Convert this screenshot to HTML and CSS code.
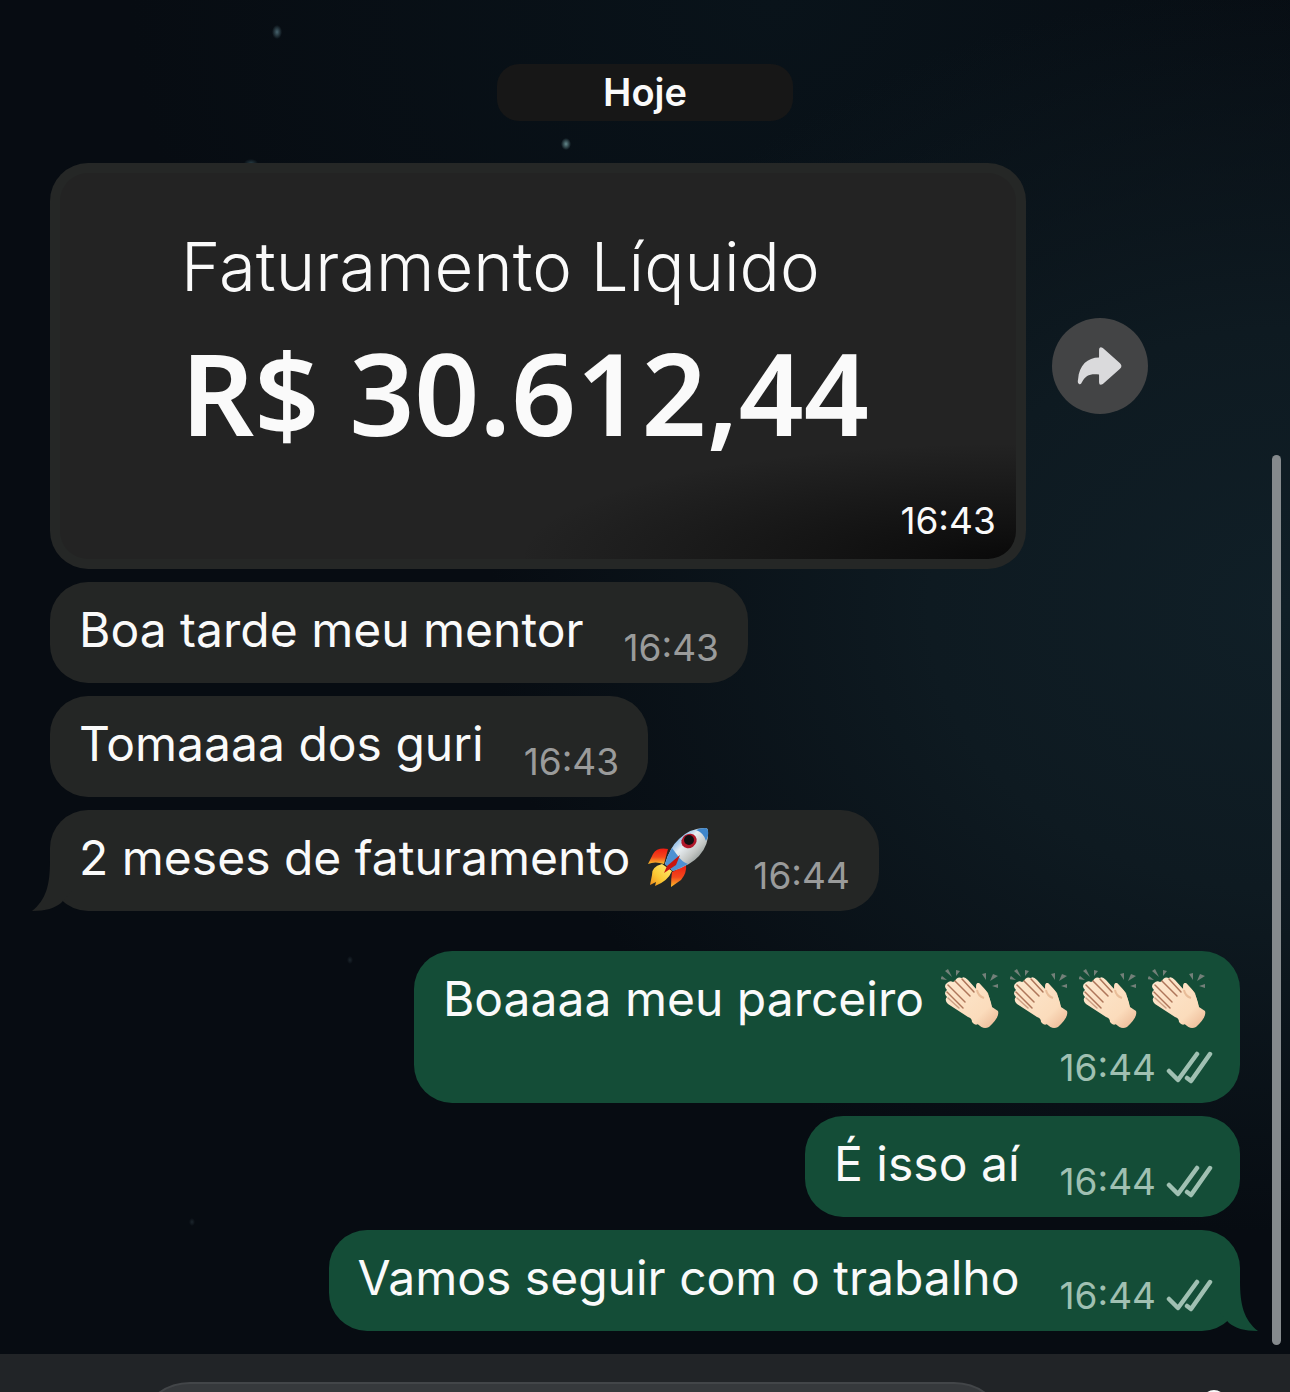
FILE: index.html
```html
<!DOCTYPE html>
<html lang="pt-BR">
<head>
<meta charset="utf-8">
<meta name="viewport" content="width=device-width, initial-scale=1">
<title>Conversa</title>
<link rel="stylesheet" href="styles.css">
</head>
<body>
<svg class="defs" aria-hidden="true">
  <defs>
    <linearGradient id="fin" x1="0" y1="0" x2="0" y2="1">
      <stop offset="0" stop-color="#ee1c12"/><stop offset=".55" stop-color="#f4481c"/><stop offset="1" stop-color="#fbc02a"/>
    </linearGradient>
    <linearGradient id="flame" x1="1" y1="0" x2="0" y2="1">
      <stop offset="0" stop-color="#fff27a"/><stop offset=".6" stop-color="#fbc934"/><stop offset="1" stop-color="#f08a1c"/>
    </linearGradient>
    <linearGradient id="hull" x1="0" y1="0" x2="1" y2="1">
      <stop offset=".2" stop-color="#5a9fe0"/><stop offset=".42" stop-color="#e8eef2"/><stop offset=".62" stop-color="#c3c6c4"/><stop offset=".85" stop-color="#77827f"/>
    </linearGradient>
    <linearGradient id="skin" x1="0" y1="0" x2="1" y2="1">
      <stop offset="0" stop-color="#fde8cf"/><stop offset=".7" stop-color="#fbdcbc"/><stop offset="1" stop-color="#eab591"/>
    </linearGradient>
    <symbol id="rocket" viewBox="0 0 66 62">
      <path d="M21 22 Q10 20 6 27 L1 37 Q8 34 17 37Z" fill="url(#fin)"/>
      <path d="M39 38 Q40 46 34 53 L24 60 Q24 52 25 45Z" fill="url(#fin)"/>
      <path d="M15 37 Q4 40 5 48 L3 58 L9 55 L8 59 Q21 54 25 44Z" fill="url(#flame)"/>
      <path d="M58 1 Q43 1 32 12 Q23 20 18 37 L26 44 Q44 38 52 29 Q62 18 61 4 Q61 1 58 1Z" fill="url(#hull)"/>
      <path d="M58 1 Q53 1 49 3 Q57 6 59 14 Q62 8 61 4 Q61 1 58 1Z" fill="#3f86ca"/>
      <path d="M25 21 Q20 29 18 37 L26 44 Q34 41 41 37 Q34 34 31 29Z" fill="#4e91d3"/>
      <path d="M33 28 L20 39 L17 46 L29 38Z" fill="#c9150f"/>
      <ellipse cx="42" cy="14" rx="8" ry="7" transform="rotate(-35 42 14)" fill="#b0182a"/>
      <ellipse cx="42" cy="13" rx="5" ry="5" fill="#121012"/>
    </symbol>
    <symbol id="clap" viewBox="0 0 66 62">
      <g fill="#738079">
        <path d="M4 3 L7 1 L11 9Z"/><path d="M15 2 L19 3 L15 8Z"/><path d="M-1 11 L1 8 L6 12Z"/>
        <path d="M41 6 L45 5 L45 12Z"/><path d="M52 6 L57 8 L49 13Z"/><path d="M57 16 L57 20 L51 18Z"/>
      </g>
      <path d="M35 20 Q35 13 39 16 Q44 21 47 25 L51 40 Q57 42 56 49 L46 58 Q34 59 29 46Z" fill="#f3cba8"/>
      <path d="M14 13 Q16 8 21 10 Q23 8 27 12 L36 22 Q34 14 38 15 L45 23 Q49 29 51 39 L57 43 Q59 49 48 59 Q42 62 37 56 Q34 58 31 54 Q31 50 27 49 L7 36 Q3 32 6 29 Q2 25 6 22 Q2 18 6 15 Q9 12 12 14Z" fill="url(#skin)"/>
      <g fill="none" stroke="#ae765a" stroke-width="1.5" stroke-linecap="round">
        <path d="M14 13 L29 28"/><path d="M21 11 L33 24"/><path d="M7 17 L24 34"/><path d="M6 24 L22 40"/><path d="M7 30 L18 40" opacity=".6"/>
      </g>
      <path d="M36 22 Q37 28 43 30" fill="none" stroke="#e8bd99" stroke-width="2"/>
    </symbol>
    <symbol id="ticks" viewBox="0 0 48 34">
      <g fill="none" stroke="currentColor" stroke-width="4.5" stroke-linecap="round" stroke-linejoin="round">
        <path d="M3 20 L12 29 L31 3"/><path d="M21 27 L25 30 L44 3"/>
      </g>
    </symbol>
  </defs>
</svg>

<div class="app">
  <main class="chat">
    <div class="date">Hoje</div>

    <section class="group" aria-label="Mensagens recebidas">
      <div class="row">
        <figure class="photo">
          <div class="photo-body">
            <p class="photo-title">Faturamento Líquido</p>
            <p class="photo-amount">R$ 30.612,44</p>
            <time class="photo-time">16:43</time>
          </div>
        </figure>
        <button class="forward" type="button" aria-label="Encaminhar">
          <svg viewBox="0 0 48 42" aria-hidden="true"><path d="M23 4 Q23 0 27 2 L45 18 Q48 21 45 24 L27 40 Q23 42 23 38 V30 C13 29 9 31 5 38 Q4 41 2 40 Q0 39 1 35 C2 20 11 12 23 12Z" fill="currentColor"/></svg>
        </button>
      </div>
      <article class="bubble"><p class="text">Boa tarde meu mentor</p><span class="meta"><time>16:43</time></span></article>
      <article class="bubble"><p class="text">Tomaaaa dos guri</p><span class="meta"><time>16:43</time></span></article>
      <article class="bubble">
        <p class="text">2 meses de faturamento <svg class="emoji" role="img" aria-label="foguete"><use href="#rocket"/></svg></p><span class="meta"><time>16:44</time></span>
        <svg class="tail" viewBox="0 0 40 50" aria-hidden="true"><path d="M18 0 C18 24 14 39 0 50 C14 50 23 47 29 42 L40 30 V0Z" fill="currentColor"/></svg>
      </article>
    </section>

    <section class="group sent" aria-label="Mensagens enviadas">
      <article class="bubble stacked">
        <p class="text">Boaaaa meu parceiro <span class="emojis"><svg class="emoji" role="img" aria-label="palmas"><use href="#clap"/></svg><svg class="emoji" role="img" aria-label="palmas"><use href="#clap"/></svg><svg class="emoji" role="img" aria-label="palmas"><use href="#clap"/></svg><svg class="emoji" role="img" aria-label="palmas"><use href="#clap"/></svg></span></p>
        <span class="meta"><time>16:44</time><svg class="ticks" role="img" aria-label="Entregue"><use href="#ticks"/></svg></span>
      </article>
      <article class="bubble"><p class="text">É isso aí</p><span class="meta"><time>16:44</time><svg class="ticks" role="img" aria-label="Entregue"><use href="#ticks"/></svg></span></article>
      <article class="bubble">
        <p class="text">Vamos seguir com o trabalho</p><span class="meta"><time>16:44</time><svg class="ticks" role="img" aria-label="Entregue"><use href="#ticks"/></svg></span>
        <svg class="tail" viewBox="0 0 40 50" aria-hidden="true"><path d="M18 0 C18 24 14 39 0 50 C14 50 23 47 29 42 L40 30 V0Z" fill="currentColor"/></svg>
      </article>
    </section>
    <div class="scrollbar"></div>
  </main>

  <footer class="composer">
    <input class="field" type="text" aria-label="Mensagem">
    <button class="camera" type="button" aria-label="Câmera"></button>
  </footer>
</div>
</body>
</html>
```
FILE: styles.css
```css
* { box-sizing: border-box; }

body {
  margin: 0;
  background: #070c12;
  color: #fafafa;
  font-family: Inter, "Liberation Sans", sans-serif;
}

p, figure { margin: 0; }
.defs { position: absolute; width: 0; height: 0; }

.app {
  display: flex;
  flex-direction: column;
  min-height: 100vh;
}

.chat {
  position: relative;
  flex: 1;
  display: flex;
  flex-direction: column;
  padding: 64px 50px 22px;
  background:
    radial-gradient(ellipse 5px 7px at 277px 32px, #47636d, transparent),
    radial-gradient(ellipse 5px 6px at 566px 144px, #64898c, transparent),
    radial-gradient(ellipse 7px 4px at 251px 163px, #263a42, transparent),
    radial-gradient(ellipse 3px 4px at 350px 960px, #1c262d, transparent),
    radial-gradient(ellipse 3px 4px at 192px 1222px, #1c262d, transparent),
    radial-gradient(ellipse 62% 46% at 100% 45%, #101f27, #0e1a21 45%, transparent),
    radial-gradient(ellipse 50% 40% at 60% 0%, #09131a, transparent),
    #070c12;
}

.date {
  align-self: center;
  width: 296px;
  margin-bottom: 42px;
  border-radius: 22px;
  background: #171717;
  font-size: 38px;
  font-weight: 600;
  line-height: 57px;
  text-align: center;
}

.group {
  display: flex;
  flex-direction: column;
  align-items: flex-start;
  gap: 13px;
}

.row {
  display: flex;
  align-items: center;
  gap: 26px;
  width: 100%;
}

.photo {
  width: 82%;
  padding: 10px;
  border-radius: 38px;
  background: #252726;
}

.photo-body {
  position: relative;
  padding: 54px 40px 101px 121px;
  border-radius: 28px;
  background:
    radial-gradient(ellipse 52% 30% at 100% 100%, #090909, #0f0f0f 20%, transparent),
    #232323;
  white-space: nowrap;
}

.photo-title {
  margin-bottom: 19px;
  font-size: 67px;
  font-weight: 300;
  line-height: 80px;
}

.photo-amount {
  font-family: "Noto Sans", "Open Sans", sans-serif;
  font-size: 114px;
  font-weight: 600;
  line-height: 132px;
}

.photo-time {
  position: absolute;
  right: 20px;
  bottom: 16px;
  font-size: 37px;
  line-height: 44px;
}

.forward {
  flex: none;
  display: grid;
  place-items: center;
  width: 96px;
  height: 96px;
  padding: 0;
  border: 0;
  border-radius: 50%;
  background: #434445;
  color: #dadadc;
}
.forward svg { width: 46px; height: 40px; }

.bubble {
  position: relative;
  display: flex;
  align-items: flex-end;
  gap: 7px 40px;
  padding: 18px 29px 13px;
  border-radius: 38px;
  background: #242625;
}

.text {
  display: flex;
  align-items: center;
  gap: 17px;
  margin-bottom: 10px;
  font-size: 48px;
  line-height: 60px;
  white-space: nowrap;
}

.emojis { display: flex; gap: 3px; }
.emoji { flex: none; width: 66px; height: 62px; margin: -1px 0; overflow: visible; }
.emoji symbol { overflow: visible; }

.meta {
  display: flex;
  align-items: center;
  gap: 10px;
  color: #9a9b9b;
  font-size: 37px;
  line-height: 44px;
}
.ticks { width: 48px; height: 34px; }

.sent {
  align-items: flex-end;
  margin-top: 40px;
}
.sent .bubble { padding-right: 26px; background: #144d37; }
.sent .meta { color: #a0c0b2; }
.stacked { flex-direction: column; }

.tail {
  position: absolute;
  left: -18px;
  bottom: 0;
  width: 40px;
  height: 50px;
  color: #242625;
}
.sent .tail {
  left: auto;
  right: -18px;
  color: #144d37;
  transform: scaleX(-1);
}

.scrollbar {
  position: absolute;
  top: 455px;
  right: 9px;
  bottom: 9px;
  width: 9px;
  border-radius: 5px;
  background: #858a8d;
}

.composer {
  display: flex;
  align-items: flex-start;
  gap: 194px;
  height: 38px;
  padding: 28px 64px 0 136px;
  overflow: hidden;
  background: #212427;
}

.field {
  flex: 1;
  height: 108px;
  border: 2px solid #434649;
  border-radius: 54px;
  background: #36393c;
  color: #fafafa;
}

.camera {
  width: 24px;
  height: 24px;
  margin-top: 8px;
  padding: 0;
  border: 0;
  border-radius: 50%;
  background: #fafafa;
}
```
